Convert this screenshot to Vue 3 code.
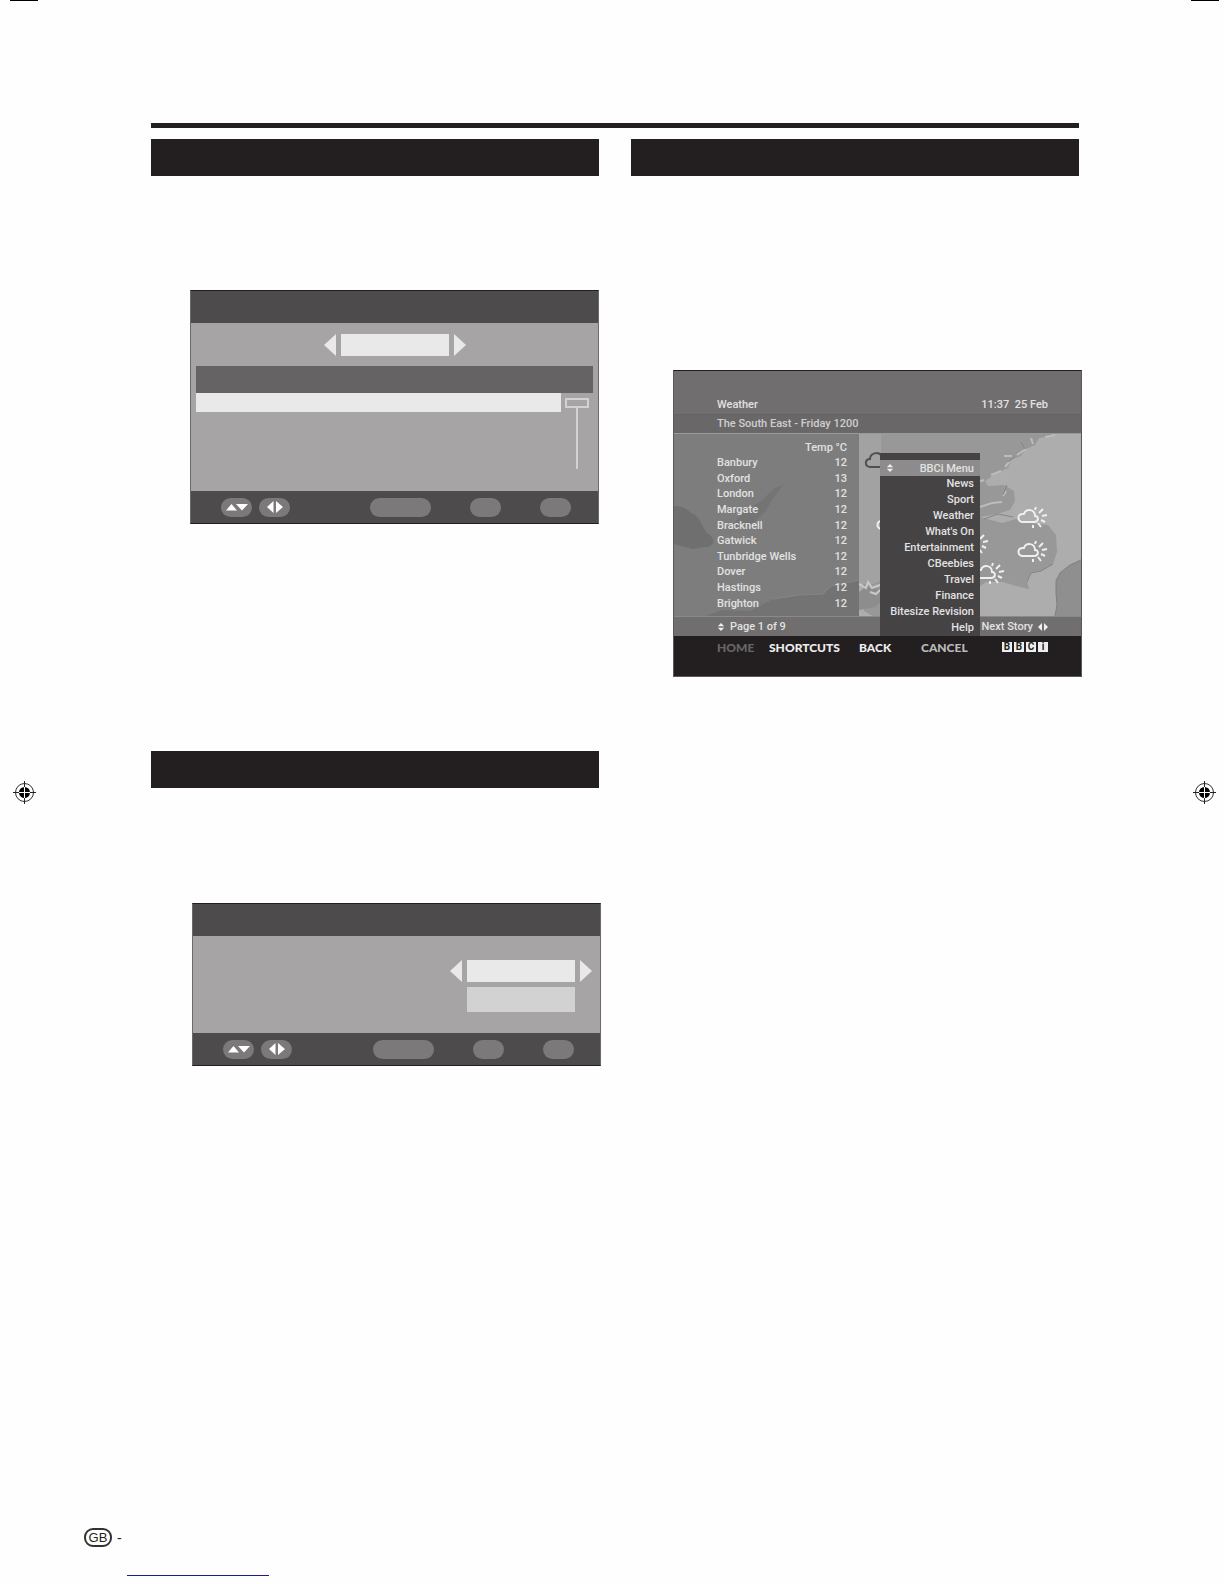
<script setup>
import { ref } from 'vue'

// Temperatures listed on the weather page
const cities = ref([
  { name: 'Banbury', temp: 12 },
  { name: 'Oxford', temp: 13 },
  { name: 'London', temp: 12 },
  { name: 'Margate', temp: 12 },
  { name: 'Bracknell', temp: 12 },
  { name: 'Gatwick', temp: 12 },
  { name: 'Tunbridge Wells', temp: 12 },
  { name: 'Dover', temp: 12 },
  { name: 'Hastings', temp: 12 },
  { name: 'Brighton', temp: 12 }
])

// Entries of the pop-up menu
const menuItems = [
  'News',
  'Sport',
  'Weather',
  "What's On",
  'Entertainment',
  'CBeebies',
  'Travel',
  'Finance',
  'Bitesize Revision',
  'Help'
]
const selected = ref('')

const logo = ['B', 'B', 'C', 'i']

// Places of the sunny-cloud symbols on the map
const symbols = [
  { x: 344, y: 75 },
  { x: 344, y: 109 },
  { x: 301, y: 131 },
  { x: 285, y: 101 },
  { x: 203, y: 82 }
]
</script>

<template>
  <div class="page">
    <!-- Crop and registration marks in the margins -->
    <div class="margin margin-left">
      <span class="crop"></span>
      <svg class="target" viewBox="0 0 23 23" aria-hidden="true">
        <circle cx="11.5" cy="11.5" r="9" fill="none" stroke="#333" />
        <circle cx="11.5" cy="11.5" r="5.5" fill="#000" />
        <path d="M0 11.5h6M17 11.5h6M11.5 0v6M11.5 17v6" stroke="#222" />
        <path d="M6 11.5h11M11.5 6v11" stroke="#fff" />
      </svg>
    </div>
    <div class="margin margin-right">
      <span class="crop"></span>
      <svg class="target" viewBox="0 0 23 23" aria-hidden="true">
        <circle cx="11.5" cy="11.5" r="9" fill="none" stroke="#333" />
        <circle cx="11.5" cy="11.5" r="5.5" fill="#000" />
        <path d="M0 11.5h6M17 11.5h6M11.5 0v6M11.5 17v6" stroke="#222" />
        <path d="M6 11.5h11M11.5 6v11" stroke="#fff" />
      </svg>
    </div>

    <main class="content">
      <hr class="rule" />
      <div class="columns">
        <section class="column">
          <div class="bar"></div>

          <!-- List panel -->
          <div class="panel panel-list">
            <div class="panel-head"></div>
            <div class="panel-body list-body">
              <div class="selector">
                <button class="arrow" aria-label="Previous">
                  <svg viewBox="0 0 12 22"><path d="M12 0v22L0 11z" /></svg>
                </button>
                <input class="value" type="text" readonly aria-label="Value" />
                <button class="arrow" aria-label="Next">
                  <svg viewBox="0 0 12 22"><path d="M0 0v22l12-11z" /></svg>
                </button>
              </div>
              <div class="list-head"></div>
              <div class="list">
                <div class="list-row"></div>
                <div class="scroll">
                  <span class="thumb"></span>
                  <span class="track"></span>
                </div>
              </div>
            </div>
            <div class="panel-foot">
              <button class="pill" aria-label="Up and down">
                <svg viewBox="0 0 24 8"><path d="M1 7.500h11L6.500 1zM11 1h12l-6 6.500z" /></svg>
              </button>
              <button class="pill" aria-label="Left and right">
                <svg viewBox="0 0 24 12"><path d="M10.500 0v12L4 6zM13 0v12l7-6z" /></svg>
              </button>
              <button class="pill wide" aria-label="Menu"></button>
              <button class="pill third" aria-label="OK"></button>
              <button class="pill fourth" aria-label="Exit"></button>
            </div>
          </div>

          <div class="bar second-bar"></div>

          <!-- Settings panel -->
          <div class="panel panel-settings">
            <div class="panel-head"></div>
            <div class="panel-body settings-body">
              <div class="selector">
                <button class="arrow" aria-label="Previous">
                  <svg viewBox="0 0 12 22"><path d="M12 0v22L0 11z" /></svg>
                </button>
                <input class="value" type="text" readonly aria-label="Setting" />
                <button class="arrow" aria-label="Next">
                  <svg viewBox="0 0 12 22"><path d="M0 0v22l12-11z" /></svg>
                </button>
              </div>
              <input class="value dim" type="text" readonly aria-label="Second setting" />
            </div>
            <div class="panel-foot">
              <button class="pill" aria-label="Up and down">
                <svg viewBox="0 0 24 8"><path d="M1 7.500h11L6.500 1zM11 1h12l-6 6.500z" /></svg>
              </button>
              <button class="pill" aria-label="Left and right">
                <svg viewBox="0 0 24 12"><path d="M10.500 0v12L4 6zM13 0v12l7-6z" /></svg>
              </button>
              <button class="pill wide" aria-label="Menu"></button>
              <button class="pill third" aria-label="OK"></button>
              <button class="pill fourth" aria-label="Exit"></button>
            </div>
          </div>
        </section>

        <section class="column">
          <div class="bar"></div>

          <!-- Television text service -->
          <div class="tv">
            <header class="tv-head">
              <span>Weather</span>
              <span>11:37&nbsp; 25 Feb</span>
            </header>
            <div class="tv-sub">The South East - Friday 1200</div>

            <div class="tv-main">
              <svg class="map" viewBox="0 0 407 182" preserveAspectRatio="none" aria-hidden="true">
                <rect width="407" height="182" fill="#adadad" />
                <!-- Land -->
                <path
                  fill="#989898"
                  d="M185 0H381l-8 3-8 1-4 7-9 4-5 7-9 3-4 9-12 5-11 8 3 5 16-1 10 6 1 10-5 9-13 4-17 3 22 6 14-4 15 4 17 2 8 10 1 17-4 12-12 7-10 2-4 9 2 7-13-3-13-4-17 0-32 22-20 7-33 5-23 3-14-8z"
                />
                <path fill="#a2a2a2" d="M185 0h22v146l-12 6-10-4z" />
                <path
                  fill="none"
                  stroke="#bcbcbc"
                  stroke-width="2"
                  d="M381 1l-10 2M357 4l2 6M352 15l-9 6M338 22l-8 0M336 27l-5 6M327 37l-10 4M310 46l-6 2M332 57l-3 5M306 73l12-4 10-1"
                />
                <path fill="none" stroke="#858585" d="M347 8l4 7M341 23l-7 5M333 51l-4 10M310 85l14-5 15 3M379 130l-12 7-10 2-4 9" />
                <path fill="#8f8f8f" d="M407 126l-11 5-10 8-4 8v12l1 12-2 11h26z" />
                <path fill="none" stroke="#7f7f7f" d="M407 126l-11 5-10 8-4 8v12l1 12-2 11" />
                <path fill="#8d8d8d" d="M185 158l8-6 12 3 5 10-9 8-16 3z" />
                <path fill="none" stroke="#c9c9c9" stroke-width="2" d="M185 150l7 4 2-6 4 6 8-3M196 158l6 2 4-4" />
                <path
                  fill="none"
                  stroke="#505050"
                  stroke-width="2"
                  d="M210 33h-14c-6-1-5-8 0-8 0-6 8-8 12-3"
                />
                <g v-for="(s, i) in symbols" :key="i" :transform="`translate(${s.x} ${s.y})`" class="symbol">
                  <path d="M4 13h12c5 0 5-6 1-6 0-7-9-8-11-2-7-1-7 7-2 8z" />
                  <path d="M17 1l1-3M21 4l4-4M24 7l5-1M23 11l4 2M20 14l3 4M15 16l0 3" />
                </g>
                <!-- Dimmed strip under the temperatures -->
                <rect width="185" height="182" fill="#7d7d7d" />
                <path fill="#6f6f6f" d="M0 72c9 0 13 3 17 7 9 2 11 14 16 20 12 8 5 15-3 14l-11 2-19-5z" />
                <path fill="#747474" d="M109 51l-8 3-14 13-20 13-11 16 20-4 15-14 7-12z" />
                <path fill="#737373" d="M31 182l18-6 27 1 23-12 26-4 24-1 8-8 28-6v36z" />
                <path fill="none" stroke="#858585" d="M99 165l26-4 24-1 8-8 28-6" />
              </svg>

              <table class="temps">
                <thead>
                  <tr>
                    <th></th>
                    <th>Temp °C</th>
                  </tr>
                </thead>
                <tbody>
                  <tr v-for="city in cities" :key="city.name">
                    <td>{{ city.name }}</td>
                    <td>{{ city.temp }}</td>
                  </tr>
                </tbody>
              </table>
            </div>

            <div class="tv-nav">
              <span class="nav-item">
                <svg class="nav-icon" viewBox="0 0 8 10"><path d="M0 4h8L4 0zM0 6h8l-4 4z" /></svg>
                Page 1 of 9
              </span>
              <span class="nav-item">
                Next Story
                <svg class="nav-icon side" viewBox="0 0 10 8"><path d="M4 0v8L0 4zM6 0v8l4-4z" /></svg>
              </span>
            </div>

            <footer class="tv-keys">
              <button class="key off">HOME</button>
              <button class="key">SHORTCUTS</button>
              <button class="key">BACK</button>
              <button class="key cancel">CANCEL</button>
              <span class="logo">
                <b v-for="(letter, i) in logo" :key="i">{{ letter }}</b>
              </span>
            </footer>

            <!-- Pop-up menu -->
            <nav class="menu">
              <div class="menu-title">
                <svg class="nav-icon" viewBox="0 0 8 10"><path d="M0 4h8L4 0zM0 6h8l-4 4z" /></svg>
                <span>BBCi Menu</span>
              </div>
              <button v-for="item in menuItems" :key="item" class="menu-item" @click="selected = item">
                {{ item }}
              </button>
            </nav>
          </div>
        </section>
      </div>
    </main>

    <footer class="page-foot">
      <div class="folio"><span class="country">GB</span><span>-</span></div>
      <a class="link" href="#" aria-label="Website" @click.prevent></a>
    </footer>
  </div>
</template>

<style>
body {
  background: #fefefe;
}
</style>

<style scoped>
* {
  box-sizing: border-box;
}

button,
input {
  margin: 0;
  padding: 0;
  border: 0;
  border-radius: 0;
  background: none;
  font: inherit;
  color: inherit;
}

svg {
  display: block;
}

.page {
  display: grid;
  grid-template-columns: 151px 1fr 145px;
  grid-template-rows: 1fr;
  min-height: 100vh;
  font-family: Roboto, sans-serif;
}

/* Page margins */
.margin {
  grid-row: 1;
  display: grid;
  grid-template-rows: 1px 1fr 1px;
}

.margin-left {
  grid-column: 1;
  padding-left: 10px;
}

.margin-right {
  grid-column: 3;
  justify-items: end;
  padding-right: 5px;
}

.crop {
  width: 28px;
  background: #000;
}

.target {
  width: 23px;
  height: 23px;
  align-self: center;
  margin: 0 3px;
}

/* Two column content */
.content {
  grid-row: 1;
  grid-column: 2;
  padding-top: 123px;
}

.rule {
  height: 5px;
  margin: 0 0 11px;
  border: 0;
  background: #231f20;
}

.columns {
  display: grid;
  grid-template-columns: 1fr 1fr;
  gap: 32px;
}

.bar {
  height: 37px;
  background: #231f20;
}

.second-bar {
  margin-top: 227px;
}

/* Menu panels */
.panel {
  border: 1px solid #6b696a;
  border-top-color: #231f20;
  border-bottom-color: #231f20;
  background: #a6a4a5;
}

.panel-list {
  margin: 114px 0 0 39px;
}

.panel-settings {
  margin: 115px -2px 0 41px;
}

.panel-head {
  height: 32px;
  background: #4d4b4c;
}

.list-body {
  height: 168px;
  padding: 11px 5px 0;
}

.settings-body {
  display: flex;
  flex-direction: column;
  align-items: flex-end;
  gap: 5px;
  height: 97px;
  padding: 24px 8px 0 0;
}

.selector {
  display: flex;
  justify-content: center;
  gap: 5px;
}

.arrow {
  width: 12px;
  height: 22px;
  fill: #e9e9e9;
}

.value {
  width: 108px;
  height: 22px;
  background: #e9e9e9;
}

.dim {
  height: 25px;
  margin-right: 17px;
  background: #d2d2d2;
}

.list-head {
  height: 27px;
  margin-top: 10px;
  background: #656364;
}

.list {
  display: flex;
  gap: 4px;
  padding-right: 4px;
}

.list-row {
  flex: 1;
  height: 19px;
  background: #e9e9e9;
}

.scroll {
  display: flex;
  flex-direction: column;
  align-items: center;
  padding-top: 5px;
}

.thumb {
  width: 24px;
  height: 10px;
  border: 2px solid #d2d2d2;
}

.track {
  width: 2px;
  height: 61px;
  background: #d2d2d2;
}

.panel-foot {
  display: flex;
  align-items: center;
  gap: 7px;
  height: 32px;
  padding-left: 30px;
  background: #4d4b4c;
}

.pill {
  display: flex;
  align-items: center;
  justify-content: center;
  width: 31px;
  height: 19px;
  border-radius: 10px;
  background: #7b797a;
  fill: #fff;
}

.pill svg {
  width: 24px;
}

.wide {
  width: 61px;
  margin-left: 73px;
}

.panel-settings .wide {
  margin-left: 74px;
}

.third,
.fourth {
  margin-left: 32px;
}

/* Television screen */
.tv {
  position: relative;
  margin: 194px -3px 0 42px;
  border: 1px solid #5a5859;
  border-top-color: #231f20;
  background: #231f20;
  color: #e2e2e2;
  font-size: 11px;
  font-weight: 500;
  line-height: 15px;
}

.tv-head {
  display: flex;
  align-items: flex-end;
  justify-content: space-between;
  height: 43px;
  padding: 0 33px 2px 43px;
  background: #706e6f;
}

.tv-sub {
  height: 20px;
  padding: 1px 43px;
  border-top: 1px solid #656364;
  border-bottom: 1px solid #999;
  background: #696768;
  color: #cfcfcf;
}

.tv-main {
  display: grid;
  height: 182px;
}

.map {
  grid-area: 1 / 1;
  width: 100%;
  height: 182px;
}

.symbol {
  fill: none;
  stroke: #efefef;
  stroke-width: 2;
}

.temps {
  grid-area: 1 / 1;
  width: 130px;
  height: 171px;
  margin: 6px 0 0 43px;
  border-collapse: collapse;
}

.temps th,
.temps td {
  padding: 0;
  font-weight: 500;
  line-height: 15px;
}

.temps th:last-child,
.temps td:last-child {
  text-align: right;
}

.tv-nav {
  display: flex;
  align-items: center;
  justify-content: space-between;
  height: 20px;
  padding: 0 33px 0 43px;
  border-top: 1px solid #8a8a8a;
  background: #706e6f;
}

.nav-item {
  display: flex;
  align-items: center;
  gap: 5px;
}

.nav-icon {
  width: 8px;
  height: 8px;
  fill: #eee;
}

.side {
  width: 10px;
}

.tv-keys {
  display: grid;
  grid-template-columns: 52px 90px 62px 1fr auto;
  align-items: center;
  height: 40px;
  padding: 0 33px 18px 43px;
}

.key {
  color: #eee;
  font-family: Lato, sans-serif;
  font-size: 12px;
  font-weight: 900;
  text-align: left;
}

.off {
  color: #666;
}

.cancel {
  color: #bbb;
}

.logo {
  display: flex;
  gap: 2px;
}

.logo b {
  width: 10px;
  height: 10px;
  background: #eee;
  color: #231f20;
  font-size: 10px;
  line-height: 10px;
  text-align: center;
}

/* Pop-up menu over the map */
.menu {
  position: absolute;
  top: 82px;
  right: 101px;
  display: flex;
  flex-direction: column;
  width: 100px;
  padding-top: 7px;
  background: #454344;
}

.menu-title {
  display: flex;
  align-items: center;
  justify-content: space-between;
  height: 16px;
  padding: 0 6px;
  background: #8d8b8c;
}

.menu-item {
  height: 16px;
  padding-right: 6px;
  line-height: 16px;
  text-align: right;
  white-space: nowrap;
}

/* Page footer */
.page-foot {
  grid-row: 1;
  grid-column: 1 / -1;
  align-self: end;
  padding: 0 0 8px 84px;
}

.folio {
  display: flex;
  align-items: center;
  gap: 5px;
  color: #231f20;
  font-family: "Liberation Sans", sans-serif;
  font-size: 14px;
}

.country {
  width: 28px;
  height: 19px;
  border: 2px solid #333;
  border-radius: 9px;
  font-family: "Liberation Sans Narrow", "Liberation Sans", sans-serif;
  font-size: 13px;
  line-height: 15px;
  text-align: center;
}

.link {
  display: block;
  width: 142px;
  height: 29px;
  margin-left: 43px;
  border-bottom: 1px solid #1c1c8c;
}
</style>
